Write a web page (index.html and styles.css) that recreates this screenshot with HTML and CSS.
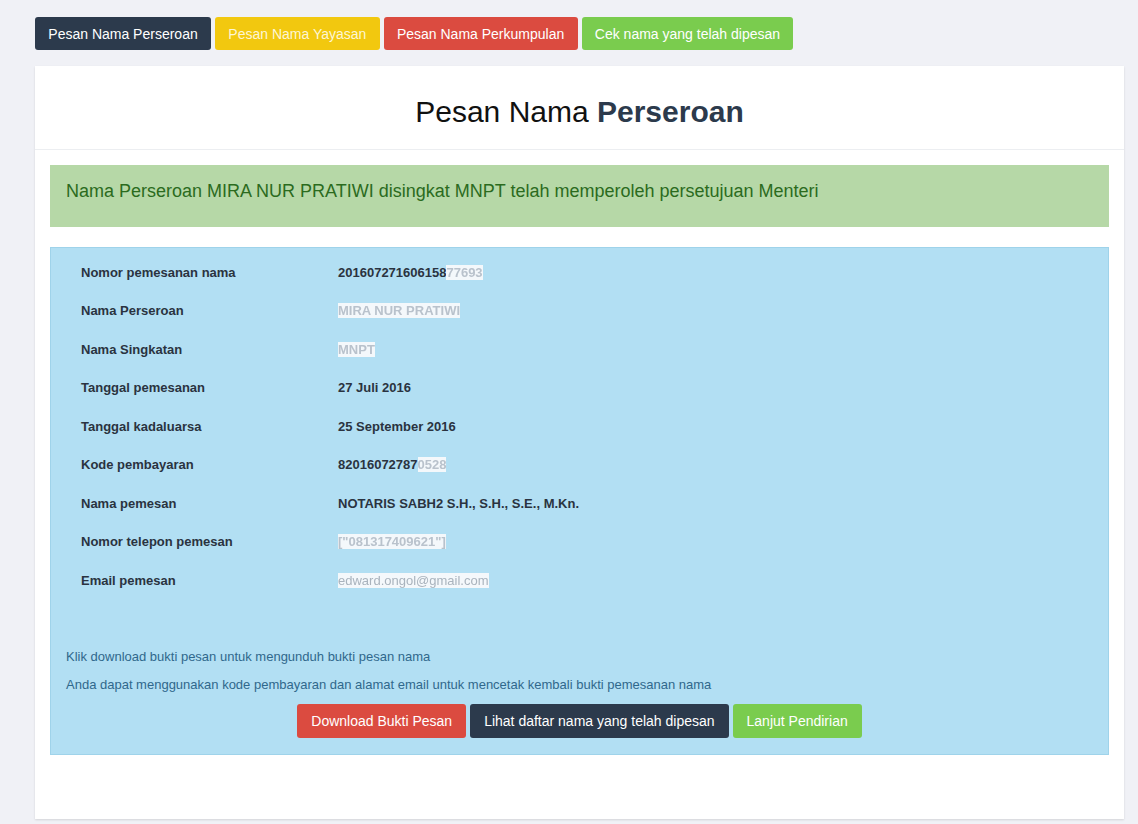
FILE: index.html
```html
<!DOCTYPE html>
<html lang="id">
<head>
<meta charset="utf-8">
<title>Pesan Nama Perseroan</title>
<link rel="stylesheet" href="styles.css">
</head>
<body>
<div class="page">
  <nav class="tabs">
    <a class="btn btn-dark">Pesan Nama Perseroan</a>
    <a class="btn btn-yellow">Pesan Nama Yayasan</a>
    <a class="btn btn-red">Pesan Nama Perkumpulan</a>
    <a class="btn btn-green">Cek nama yang telah dipesan</a>
  </nav>
  <section class="panel">
    <header class="panel-head">
      <h1 class="title">Pesan Nama <b>Perseroan</b></h1>
    </header>
    <div class="panel-body">
      <div class="alert">Nama Perseroan MIRA NUR PRATIWI disingkat MNPT telah memperoleh persetujuan Menteri</div>
      <div class="info">
        <div class="rows">
          <div class="row"><span class="lbl">Nomor pemesanan nama</span><span class="val">201607271606158<span class="blur">77693</span></span></div>
          <div class="row"><span class="lbl">Nama Perseroan</span><span class="val"><span class="blur">MIRA NUR PRATIWI</span></span></div>
          <div class="row"><span class="lbl">Nama Singkatan</span><span class="val"><span class="blur">MNPT</span></span></div>
          <div class="row"><span class="lbl">Tanggal pemesanan</span><span class="val">27 Juli 2016</span></div>
          <div class="row"><span class="lbl">Tanggal kadaluarsa</span><span class="val">25 September 2016</span></div>
          <div class="row"><span class="lbl">Kode pembayaran</span><span class="val">82016072787<span class="blur">0528</span></span></div>
          <div class="row"><span class="lbl">Nama pemesan</span><span class="val">NOTARIS SABH2 S.H., S.H., S.E., M.Kn.</span></div>
          <div class="row"><span class="lbl">Nomor telepon pemesan</span><span class="val"><span class="blur">["081317409621"]</span></span></div>
          <div class="row"><span class="lbl">Email pemesan</span><span class="val"><span class="blur thin">edward.ongol@gmail.com</span></span></div>
        </div>
        <p class="note first">Klik download bukti pesan untuk mengunduh bukti pesan nama</p>
        <p class="note">Anda dapat menggunakan kode pembayaran dan alamat email untuk mencetak kembali bukti pemesanan nama</p>
        <div class="actions">
          <a class="btn btn-lg btn-red">Download Bukti Pesan</a>
          <a class="btn btn-lg btn-dark">Lihat daftar nama yang telah dipesan</a>
          <a class="btn btn-lg btn-green">Lanjut Pendirian</a>
        </div>
      </div>
    </div>
  </section>
</div>
</body>
</html>
```

FILE: styles.css
```css
* { box-sizing: border-box; }
html, body { margin: 0; padding: 0; }
body {
  background: #f0f1f6;
  font-family: "Liberation Sans", Arial, sans-serif;
  color: #333;
}
.page {
  padding: 17px 14px 6px 35px;
}
.tabs {
  display: flex;
  gap: 4px;
}
.btn {
  display: inline-flex;
  align-items: center;
  justify-content: center;
  height: 33px;
  padding: 0 13.3px;
  border-radius: 3px;
  font-size: 14px;
  color: #fff;
  text-decoration: none;
  white-space: nowrap;
}
.btn-lg { height: 34px; padding: 0 14px; font-size: 14px; }
.btn-dark { background: #2c3a4c; }
.btn-yellow { background: #f2c80f; color: #fdf6d5; }
.btn-red { background: #db4b40; }
.btn-green { background: #7acc4e; }

.panel {
  margin-top: 16px;
  background: #fff;
  box-shadow: 0 1px 2px rgba(0,0,0,0.12);
}
.panel-head {
  padding: 29px 0 20px;
  border-bottom: 1px solid #eceef1;
  text-align: center;
}
.title {
  margin: 0;
  font-size: 30px;
  line-height: 34px;
  font-weight: normal;
  color: #111;
}
.title b { color: #2c3a4c; font-weight: bold; }
.panel-body {
  padding: 15px 15px 64px;
}
.alert {
  background: #b6d8a7;
  color: #2b6b1e;
  font-size: 18px;
  line-height: 20px;
  padding: 16px 16px 26px;
}
.info {
  margin-top: 20px;
  background: #b2dff3;
  border: 1px solid #9fd3ea;
  padding: 5px 15px 16px;
}
.rows {
  display: grid;
  grid-auto-rows: 38.5px;
}
.row {
  display: grid;
  grid-template-columns: 257px 1fr;
  align-items: center;
  padding-left: 15px;
  font-size: 13px;
  font-weight: bold;
  color: #2a3340;
}
.blur {
  background: #f4f8fb;
  color: #b9c2cc;
  filter: blur(0.5px);
  font-weight: bold;
}
.blur.thin { font-weight: normal; color: #a9b3bd; }
.note {
  margin: 10px 0 0;
  font-size: 13px;
  line-height: 18px;
  color: #30688c;
}
.note.first { margin-top: 48px; }
.actions {
  margin-top: 10px;
  display: flex;
  justify-content: center;
  gap: 4px;
}
```
